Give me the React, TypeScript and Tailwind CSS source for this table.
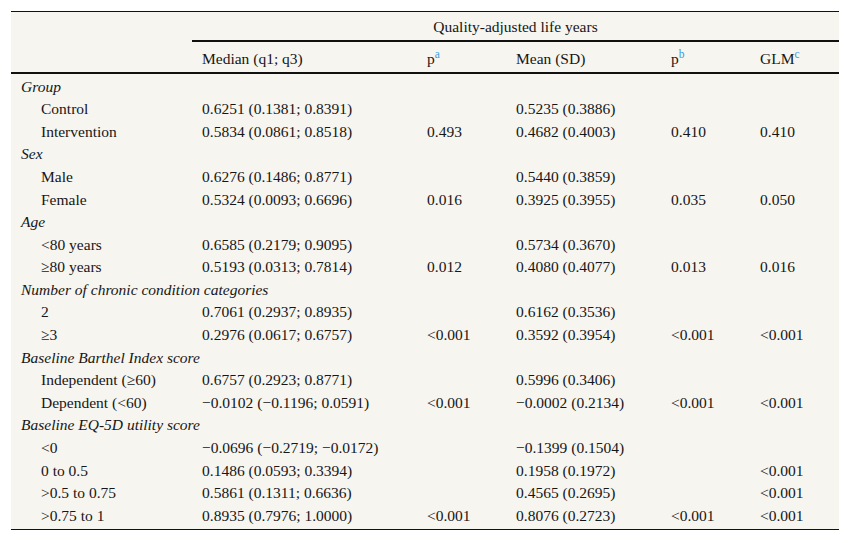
import React from "react";

type Row =
  | { kind: "cat"; label: string }
  | { kind: "item"; label: string; med: string; pa?: string; mean: string; pb?: string; glm?: string };

const M = "\u2212";

const rows: Row[] = [
  { kind: "cat", label: "Group" },
  { kind: "item", label: "Control", med: "0.6251 (0.1381; 0.8391)", mean: "0.5235 (0.3886)" },
  { kind: "item", label: "Intervention", med: "0.5834 (0.0861; 0.8518)", pa: "0.493", mean: "0.4682 (0.4003)", pb: "0.410", glm: "0.410" },
  { kind: "cat", label: "Sex" },
  { kind: "item", label: "Male", med: "0.6276 (0.1486; 0.8771)", mean: "0.5440 (0.3859)" },
  { kind: "item", label: "Female", med: "0.5324 (0.0093; 0.6696)", pa: "0.016", mean: "0.3925 (0.3955)", pb: "0.035", glm: "0.050" },
  { kind: "cat", label: "Age" },
  { kind: "item", label: "<80 years", med: "0.6585 (0.2179; 0.9095)", mean: "0.5734 (0.3670)" },
  { kind: "item", label: "\u226580 years", med: "0.5193 (0.0313; 0.7814)", pa: "0.012", mean: "0.4080 (0.4077)", pb: "0.013", glm: "0.016" },
  { kind: "cat", label: "Number of chronic condition categories" },
  { kind: "item", label: "2", med: "0.7061 (0.2937; 0.8935)", mean: "0.6162 (0.3536)" },
  { kind: "item", label: "\u22653", med: "0.2976 (0.0617; 0.6757)", pa: "<0.001", mean: "0.3592 (0.3954)", pb: "<0.001", glm: "<0.001" },
  { kind: "cat", label: "Baseline Barthel Index score" },
  { kind: "item", label: "Independent (\u226560)", med: "0.6757 (0.2923; 0.8771)", mean: "0.5996 (0.3406)" },
  { kind: "item", label: "Dependent (<60)", med: `${M}0.0102 (${M}0.1196; 0.0591)`, pa: "<0.001", mean: `${M}0.0002 (0.2134)`, pb: "<0.001", glm: "<0.001" },
  { kind: "cat", label: "Baseline EQ-5D utility score" },
  { kind: "item", label: "<0", med: `${M}0.0696 (${M}0.2719; ${M}0.0172)`, mean: `${M}0.1399 (0.1504)` },
  { kind: "item", label: "0 to 0.5", med: "0.1486 (0.0593; 0.3394)", mean: "0.1958 (0.1972)", glm: "<0.001" },
  { kind: "item", label: ">0.5 to 0.75", med: "0.5861 (0.1311; 0.6636)", mean: "0.4565 (0.2695)", glm: "<0.001" },
  { kind: "item", label: ">0.75 to 1", med: "0.8935 (0.7976; 1.0000)", pa: "<0.001", mean: "0.8076 (0.2723)", pb: "<0.001", glm: "<0.001" },
];

const Sup = ({ c }: { c: string }) => (
  <sup className="text-[11.5px] text-[#3b9ae1] top-[-6px]">{c}</sup>
);

export default function App() {
  return (
    <div className="w-[850px] h-[543px] bg-white pt-[11px] pl-[11px]" style={{ fontFamily: '"Liberation Serif", "Times New Roman", serif' }}>
      <div className="w-[828px] bg-[#f7f5f0] border-t border-[#111] text-[15.5px] text-[#161616] leading-none">
        <div className="grid grid-cols-[181px_225px_89px_155px_89px_89px]">
          <div className="h-[30px]" />
          <div className="col-span-5 h-[30px] pt-[2px] flex items-center justify-center border-b-2 border-[#111]">
            Quality-adjusted life years
          </div>
        </div>
        <div className="grid grid-cols-[181px_225px_89px_155px_89px_89px] h-[32px] pt-[4px] border-b-2 border-[#111] items-center">
          <div />
          <div className="pl-[10px]">Median (q1; q3)</div>
          <div className="pl-[10px]">p<Sup c="a" /></div>
          <div className="pl-[10px]">Mean (SD)</div>
          <div className="pl-[10px]">p<Sup c="b" /></div>
          <div className="pl-[10px]">GLM<Sup c="c" /></div>
        </div>
        <div className="pt-[1px] pb-[2px] border-b border-[#111]">
          {rows.map((r, i) =>
            r.kind === "cat" ? (
              <div key={i} className="h-[22.6px] flex items-center pl-[10px] italic">
                {r.label}
              </div>
            ) : (
              <div key={i} className="grid grid-cols-[181px_225px_89px_155px_89px_89px] h-[22.6px] items-center">
                <div className="pl-[30px]">{r.label}</div>
                <div className="pl-[10px]">{r.med}</div>
                <div className="pl-[10px]">{r.pa ?? ""}</div>
                <div className="pl-[10px]">{r.mean}</div>
                <div className="pl-[10px]">{r.pb ?? ""}</div>
                <div className="pl-[10px]">{r.glm ?? ""}</div>
              </div>
            )
          )}
        </div>
      </div>
    </div>
  );
}
